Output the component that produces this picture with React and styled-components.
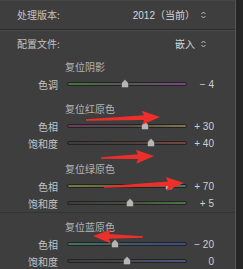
import React from "react";
import styled, { createGlobalStyle } from "styled-components";

const GlobalStyle = createGlobalStyle`
  html, body { margin: 0; padding: 0; background: #3e3e3e; }
  body { font-family: "Noto Sans CJK SC", "Liberation Sans", sans-serif; }
`;

const Frame = styled.div`
  position: relative;
  width: 243px;
  height: 269px;
  overflow: hidden;
  display: flex;
  background: #3e3e3e;
`;

const Panel = styled.div`
  flex: 1;
  display: flex;
  flex-direction: column;
  border-right: 1px solid #575757;
  border-top: 1px solid #474747;
`;

const Edge = styled.div`
  width: 7px;
  background: #262626;
`;

const HeaderRow = styled.div`
  height: ${(p) => p.$h}px;
  display: flex;
  align-items: center;
  justify-content: space-between;
  padding: 0 29px 0 17px;
  font-size: 10px;
  color: #c2c2c2;
`;

const HeaderValue = styled.div`
  display: flex;
  align-items: center;
  gap: 6px;
  color: #d6d6d6;
  font-size: 10px;
`;

const Num = styled.span`
  font-family: "Liberation Sans", sans-serif;
  font-size: 10px;
`;

const Divider = styled.div`
  height: 1px;
  background: #2b2b2b;
  border-bottom: 1px solid #4a4a4a;
`;

const Groups = styled.div`
  display: flex;
  flex-direction: column;
  padding-top: 2px;
`;

const Group = styled.div`
  display: flex;
  flex-direction: column;
  gap: 1px;
  margin-top: ${(p) => p.$mt}px;
`;

const Title = styled.div`
  height: 16px;
  line-height: 16px;
  padding-left: 65px;
  font-size: 10px;
  color: #b4b4b4;
`;

const Row = styled.div`
  height: 16px;
  display: grid;
  grid-template-columns: 58px 120px 36px;
  align-items: center;
`;

const Label = styled.div`
  text-align: right;
  font-size: 10px;
  color: #c4c4c4;
`;

const TrackWrap = styled.div`
  position: relative;
  margin-left: 9px;
  height: 4px;
  width: 120px;
`;

const Track = styled.div`
  height: 2px;
  border: 1px solid #232323;
  border-radius: 2px;
  background: ${(p) => p.$bg};
`;

const Thumb = styled.svg`
  position: absolute;
  top: -3px;
  margin-left: -4px;
`;

const Value = styled.div`
  text-align: right;
  font-family: "Liberation Sans", sans-serif;
  font-size: 10px;
  color: #cfcfcf;
  white-space: pre;
`;

const SectionLine = styled.div`
  height: 1px;
  background: #343434;
  margin: 1px 0 6px;
`;

const Overlay = styled.svg`
  position: absolute;
  left: 0;
  top: 0;
  pointer-events: none;
`;

const UpDown = () => (
  <svg width="5" height="8" viewBox="0 0 5 8">
    <path d="M0.5 3 L2.5 1 L4.5 3" fill="none" stroke="#bdbdbd" strokeWidth="1" />
    <path d="M0.5 5 L2.5 7 L4.5 5" fill="none" stroke="#bdbdbd" strokeWidth="1" />
  </svg>
);

const Slider = ({ label, value, text, bg }) => (
  <Row>
    <Label>{label}</Label>
    <TrackWrap>
      <Track $bg={bg} />
      <Thumb width="8" height="9" viewBox="0 0 8 9" style={{ left: `${50 + value / 2}%` }}>
        <path d="M4 0.3 L7.6 4 L7.6 7.6 Q7.6 8.7 6.5 8.7 L1.5 8.7 Q0.4 8.7 0.4 7.6 L0.4 4 Z" fill="#b6b6b6" stroke="#2a2a2a" strokeWidth="0.6" />
      </Thumb>
    </TrackWrap>
    <Value>{text}</Value>
  </Row>
);

function arrow(x1, y1, x2, y2, headL = 16, headW = 7, w0 = 0.7, w1 = 2.4) {
  const dx = x2 - x1, dy = y2 - y1;
  const len = Math.hypot(dx, dy);
  const ux = dx / len, uy = dy / len;
  const nx = -uy, ny = ux;
  const bx = x2 - ux * headL, by = y2 - uy * headL;
  const pts = [
    [x1 + nx * w0, y1 + ny * w0],
    [bx + nx * w1, by + ny * w1],
    [bx - ux * 2 + nx * headW, by - uy * 2 + ny * headW],
    [x2, y2],
    [bx - ux * 2 - nx * headW, by - uy * 2 - ny * headW],
    [bx - nx * w1, by - ny * w1],
    [x1 - nx * w0, y1 - ny * w0],
  ];
  return pts.map((p) => p.map((v) => v.toFixed(1)).join(",")).join(" ");
}

const arrows = [
  [86, 120, 160, 117],
  [101, 158, 154, 156],
  [104, 187, 184, 183],
  [143, 237, 93, 236],
];

const groups = [
  {
    title: "复位阴影",
    mt: 0,
    rows: [
      { label: "色调", value: -4, text: "− 4", bg: "linear-gradient(to right, #3f7a3c, #585858 50%, #7a4886)" },
    ],
  },
  {
    title: "复位红原色",
    mt: 9,
    rows: [
      { label: "色相", value: 30, text: "+ 30", bg: "linear-gradient(to right, #6e3d5c, #574a4a 50%, #857845)" },
      { label: "饱和度", value: 40, text: "+ 40", bg: "linear-gradient(to right, #3c3c3c, #4a3f3f 50%, #7a453c)" },
    ],
  },
  {
    title: "复位绿原色",
    mt: 10,
    rows: [
      { label: "色相", value: 70, text: "+ 70", bg: "linear-gradient(to right, #7d7a3c, #5a6844 50%, #3a7c64)" },
      { label: "饱和度", value: 5, text: "+ 5", bg: "linear-gradient(to right, #3c3c3c, #454f3f 50%, #4b7646)" },
    ],
  },
];

const blue = {
  title: "复位蓝原色",
  rows: [
    { label: "色相", value: -20, text: "− 20", bg: "linear-gradient(to right, #3b7a62, #3f5a6c 50%, #40498e)" },
    { label: "饱和度", value: 0, text: "0", bg: "linear-gradient(to right, #3c3c3c, #444b54 50%, #4b5884)" },
  ],
};

export default function App() {
  return (
    <>
      <GlobalStyle />
      <Frame>
        <Panel>
          <HeaderRow $h={30}>
            <span>处理版本:</span>
            <HeaderValue>
              <span>
                <Num>2012</Num>（当前）
              </span>
              <UpDown />
            </HeaderValue>
          </HeaderRow>
          <Divider />
          <HeaderRow $h={28}>
            <span>配置文件:</span>
            <HeaderValue>
              <span>嵌入</span>
              <UpDown />
            </HeaderValue>
          </HeaderRow>
          <Groups>
            {groups.map((g) => (
              <Group key={g.title} $mt={g.mt}>
                <Title>{g.title}</Title>
                {g.rows.map((r) => (
                  <Slider key={r.label} {...r} />
                ))}
              </Group>
            ))}
            <SectionLine />
            <Group $mt={0}>
              <Title>{blue.title}</Title>
              {blue.rows.map((r) => (
                <Slider key={r.label} {...r} />
              ))}
            </Group>
          </Groups>
        </Panel>
        <Edge />
        <Overlay width="243" height="269" viewBox="0 0 243 269">
          {arrows.map((a, i) => (
            <polygon key={i} points={arrow(...a)} fill="#ec2f2a" />
          ))}
        </Overlay>
      </Frame>
    </>
  );
}
